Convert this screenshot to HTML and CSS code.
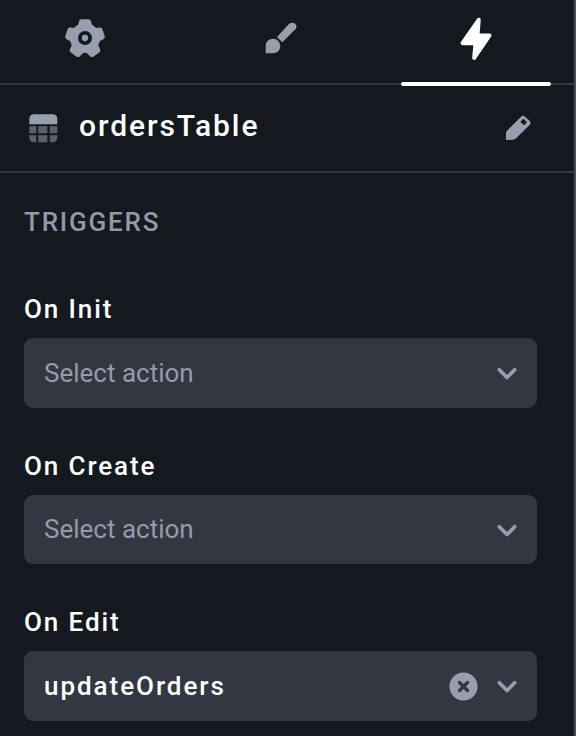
FILE: index.html
```html
<!DOCTYPE html>
<html lang="en">
<head>
<meta charset="utf-8">
<title>ordersTable</title>
<link rel="stylesheet" href="styles.css">
</head>
<body>
<main class="panel">
  <nav class="tabs">
    <button class="tab" aria-label="Settings">
      <svg width="40" height="40" viewBox="30 24 120 120" fill="currentColor">
        <defs><path id="tooth" d="M80 36H100L103 53L90 75L77 53Z" stroke="currentColor" stroke-width="17" stroke-linejoin="round"/></defs>
        <circle cx="90" cy="84" r="34" fill="none" stroke="currentColor" stroke-width="22"/>
        <use href="#tooth"/>
        <use href="#tooth" transform="rotate(72 90 86)"/>
        <use href="#tooth" transform="rotate(144 90 86)"/>
        <use href="#tooth" transform="rotate(216 90 86)"/>
        <use href="#tooth" transform="rotate(288 90 86)"/>
        <circle class="gear-hole" cx="90" cy="84" r="21"/>
        <circle cx="90" cy="84" r="9.5"/>
      </svg>
    </button>
    <button class="tab" aria-label="Styles">
      <svg width="40" height="40" viewBox="33 24 120 120" fill="currentColor">
        <path d="M47 130V107A22 22 0 1 1 69 130Z"/>
        <path d="M81 81L117 42Q125 35 134 40Q143 48 137 57L97 97Z"/>
      </svg>
    </button>
    <button class="tab tab-active" aria-label="Triggers">
      <svg width="40" height="48" viewBox="0 0 40 48" fill="currentColor">
        <path d="M22.700 5.800L6.500 29.200H19.500L18.200 44L33.500 21.500H21.500Z" stroke="currentColor" stroke-width="4" stroke-linejoin="round"/>
      </svg>
    </button>
  </nav>

  <header class="component">
    <svg class="table-icon" width="30" height="30" viewBox="-0.300 -0.300 30 30">
      <path d="M1 11V6Q1 1 6 1H24Q29 1 29 6V11Z" fill="#999eaf"/>
      <path d="M1 13H8V20H1ZM10 13H19V20H10ZM21.500 13H29V20H21.500ZM1 22H8V29H6Q1 29 1 24ZM10 22H19V29H10ZM21.500 22H29V24Q29 29 24 29H21.500Z" fill="#5d616e"/>
    </svg>
    <h1 class="name">ordersTable</h1>
    <svg class="edit-icon" width="30" height="30" viewBox="0 0 90 90">
      <path d="M6 81V60Q6 56 9 53L51 11Q57 5 63 11L77 24Q83 30 77 36L36 76Q32 80 27 80ZM49 26L60 37L69 28L58 17Z" fill="#999eaf" fill-rule="evenodd"/>
    </svg>
  </header>

  <section class="triggers">
    <h2 class="section-title">TRIGGERS</h2>
    <div class="field">
      <div class="label">On Init</div>
      <div class="select">
        <span class="placeholder">Select action</span>
        <svg class="chevron" width="20" height="14" viewBox="0 0 20 14"><path d="M2.300 2.800L10 10.500L17.700 2.800"/></svg>
      </div>
    </div>
    <div class="field">
      <div class="label">On Create</div>
      <div class="select select-short">
        <span class="placeholder">Select action</span>
        <svg class="chevron" width="20" height="14" viewBox="0 0 20 14"><path d="M2.300 2.800L10 10.500L17.700 2.800"/></svg>
      </div>
    </div>
    <div class="field">
      <div class="label">On Edit</div>
      <div class="select">
        <span class="value">updateOrders</span>
        <svg class="clear" width="29" height="29" viewBox="-0.500 -0.500 29 29"><circle cx="14" cy="14" r="14" fill="#999eaf"/><path d="M10 10L18 18M18 10L10 18" stroke="#333741" stroke-width="3.400" stroke-linecap="round"/></svg>
        <svg class="chevron" width="20" height="14" viewBox="0 0 20 14"><path d="M2.300 2.800L10 10.500L17.700 2.800"/></svg>
      </div>
    </div>
  </section>
</main>
</body>
</html>
```
FILE: styles.css
```css
* { box-sizing: border-box; }
body {
  margin: 0;
  background: #14181f;
  color: #fff;
  font-family: Roboto, sans-serif;
  overflow: hidden;
}
.panel {
  height: 736px;
  border-right: 2px solid #4a4d57;
}
.tabs {
  display: grid;
  grid-template-columns: 150px 150px 150px;
  column-gap: 45.500px;
  height: 85px;
  padding-left: 10px;
  border-bottom: 2px solid #333741;
}
.tab {
  position: relative;
  display: flex;
  justify-content: center;
  align-items: flex-start;
  padding: 18px 0 0;
  border: 0;
  background: none;
  color: #999eaf;
}
.tab-active {
  padding-top: 14px;
  color: #fff;
}
.tab-active::after {
  content: "";
  position: absolute;
  left: 0;
  right: 0;
  bottom: -3px;
  height: 4px;
  border-radius: 2px;
  background: #fff;
}
.gear-hole { fill: #14181f; }
.component {
  display: flex;
  align-items: center;
  height: 88px;
  padding: 0 40px 0 28px;
  border-bottom: 2px solid #333741;
}
.name {
  flex: 1;
  margin: -4px 0 0 21px;
  font-size: 30px;
  line-height: 36px;
  font-weight: 500;
  letter-spacing: 1.900px;
}
.triggers { padding: 34px 37px 0 24px; }
.section-title {
  margin: 0 0 57px;
  font-size: 26px;
  line-height: 30px;
  font-weight: 500;
  letter-spacing: 1.800px;
  color: #9499aa;
}
.field { margin-bottom: 43px; }
.label {
  margin-bottom: 14px;
  font-size: 26px;
  line-height: 30px;
  font-weight: 500;
  letter-spacing: 1.900px;
}
.select {
  display: flex;
  align-items: center;
  height: 70px;
  padding: 0 20px;
  border-radius: 9px;
  background: #333741;
  font-size: 26px;
  line-height: 30px;
}
.select-short { height: 69px; }
.placeholder { flex: 1; color: #969bac; }
.select-short .placeholder { margin-top: -1px; }
.value {
  flex: 1;
  font-weight: 500;
  letter-spacing: 1.950px;
}
.clear { margin-right: 19px; }
.chevron {
  margin-top: 1px;
  fill: none;
  stroke: #999eaf;
  stroke-width: 3.700;
  stroke-linecap: round;
  stroke-linejoin: round;
}
.select-short .chevron { margin-top: 3px; }
```
